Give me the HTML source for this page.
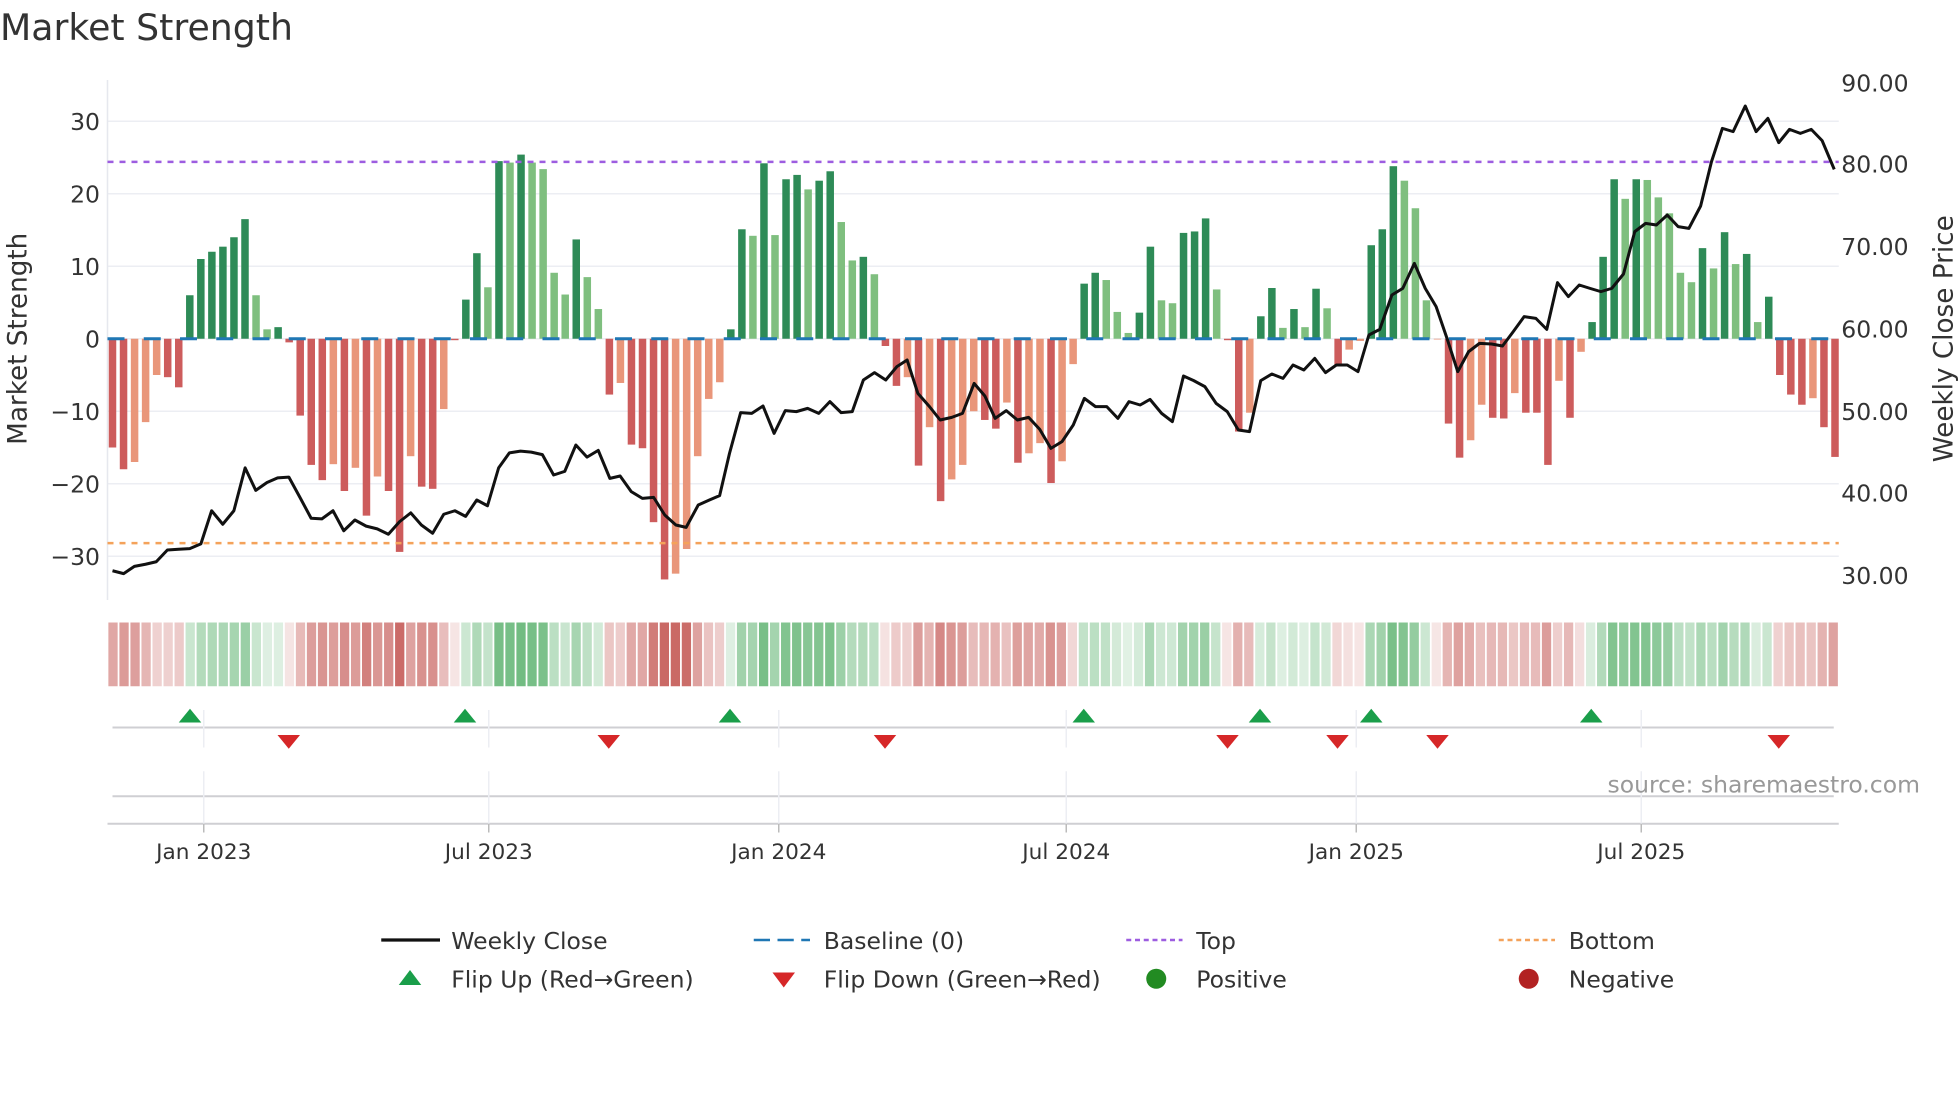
<!DOCTYPE html>
<html><head><meta charset="utf-8"><style>
html,body{margin:0;padding:0;background:#fff;width:1960px;height:1102px;overflow:hidden}
svg{display:block;font-family:"DejaVu Sans","Liberation Sans",sans-serif}
</style></head><body>
<svg id="s" width="1960" height="1102" viewBox="0 0 1568 881.6" xmlns="http://www.w3.org/2000/svg">
<text x="0" y="32" font-size="29" fill="#333">Market Strength</text>
<g id="grid"></g>
<g id="bars"></g>
<g id="lines"></g>
<g id="strip"></g>
<g id="low"></g>
<text x="80" y="104" font-size="18.8" fill="#333" text-anchor="end">30</text>
<text x="80" y="162" font-size="18.8" fill="#333" text-anchor="end">20</text>
<text x="80" y="220" font-size="18.8" fill="#333" text-anchor="end">10</text>
<text x="80" y="278" font-size="18.8" fill="#333" text-anchor="end">0</text>
<text x="80" y="336" font-size="18.8" fill="#333" text-anchor="end">−10</text>
<text x="80" y="394" font-size="18.8" fill="#333" text-anchor="end">−20</text>
<text x="80" y="452" font-size="18.8" fill="#333" text-anchor="end">−30</text>
<text x="1473" y="73" font-size="18.8" fill="#333">90.00</text>
<text x="1473" y="138" font-size="18.8" fill="#333">80.00</text>
<text x="1473" y="204" font-size="18.8" fill="#333">70.00</text>
<text x="1473" y="270" font-size="18.8" fill="#333">60.00</text>
<text x="1473" y="336" font-size="18.8" fill="#333">50.00</text>
<text x="1473" y="401" font-size="18.8" fill="#333">40.00</text>
<text x="1473" y="467" font-size="18.8" fill="#333">30.00</text>
<text transform="translate(21,271) rotate(-90)" font-size="21" fill="#333" text-anchor="middle">Market Strength</text>
<text transform="translate(1562,271) rotate(-90)" font-size="21" fill="#333" text-anchor="middle">Weekly Close Price</text>
<text x="1536" y="634" font-size="18.8" fill="#999" text-anchor="end">source: sharemaestro.com</text>
<g font-size="17.3" fill="#333" text-anchor="middle">
<text x="163" y="687">Jan 2023</text><text x="391" y="687">Jul 2023</text><text x="623" y="687">Jan 2024</text>
<text x="853" y="687">Jul 2024</text><text x="1085" y="687">Jan 2025</text><text x="1313" y="687">Jul 2025</text>
</g>
<g font-size="18.8" fill="#333">
<line x1="305" y1="752" x2="352" y2="752" stroke="#111" stroke-width="2.6"/>
<text x="361" y="759">Weekly Close</text>
<line x1="603" y1="752" x2="648" y2="752" stroke="#1f77b4" stroke-width="2" stroke-dasharray="13 6"/>
<text x="659" y="759">Baseline (0)</text>
<line x1="901" y1="752" x2="946" y2="752" stroke="#9d5de0" stroke-width="2" stroke-dasharray="4 3"/>
<text x="957" y="759">Top</text>
<line x1="1199" y1="752" x2="1244" y2="752" stroke="#f4a25a" stroke-width="2" stroke-dasharray="4 3"/>
<text x="1255" y="759">Bottom</text>
<polygon points="319,788 337,788 328,776" fill="#1a9e4a"/>
<text x="361" y="790">Flip Up (Red→Green)</text>
<polygon points="618,778 636,778 627,790" fill="#d62728"/>
<text x="659" y="790">Flip Down (Green→Red)</text>
<circle cx="925" cy="783" r="8" fill="#228b22"/>
<text x="957" y="790">Positive</text>
<circle cx="1223" cy="783" r="8" fill="#b22222"/>
<text x="1255" y="790">Negative</text>
</g>
</svg>
<script>
var NS="http://www.w3.org/2000/svg";
function el(p,t,a){var e=document.createElementNS(NS,t);for(var k in a)e.setAttribute(k,a[k]);document.getElementById(p).appendChild(e);return e;}
var data="-15D -18D -17L -11.5L -5L -5.3D -6.7D 6D 11D 12D 12.7D 14D 16.5D 6L 1.3L 1.6D -0.5D -10.6D -17.4D -19.5D -17.3L -21D -17.8L -24.4D -19L -21D -29.4D -16.2L -20.4D -20.7D -9.7L -0.2D 5.4D 11.8D 7.1L 24.5D 24.3L 25.4D 24.3L 23.4L 9.1L 6.1L 13.7D 8.5L 4.1L -7.7D -6.1L -14.6D -15.1D -25.3D -33.2D -32.4L -29L -16.2L -8.3L -6L 1.3D 15.1D 14.2L 24.2D 14.3L 22D 22.6D 20.6L 21.8D 23.1D 16.1L 10.8L 11.3D 8.9L -1D -6.5D -5.3L -17.5D -12.2L -22.4D -19.4L -17.4L -10L -11.2D -12.4D -8.8L -17.1D -15.8L -14.4L -19.9D -16.9L -3.5L 7.6D 9.1D 8.1L 3.7L 0.8L 3.6D 12.7D 5.3L 4.9L 14.6D 14.8D 16.6D 6.8L -0.2D -12.8D -10.2L 3.1D 7D 1.5L 4.1D 1.6L 6.9D 4.2L -3.6D -1.5L -0.3L 12.9D 15.1D 23.8D 21.8L 18L 5.3L -0.1L -11.7D -16.4D -14L -9.1L -10.9D -11D -7.5L -10.2D -10.2D -17.4D -5.8L -10.9D -1.8L 2.3D 11.3D 22D 19.3L 22D 21.9L 19.5L 17.3L 9.1L 7.8L 12.5D 9.7L 14.7D 10.3L 11.7D 2.3L 5.8D -5D -7.7D -9.1D -8.2L -12.2D -16.3D".split(" ");
var n=data.length,x0=90,x1=1468,dx=(x1-x0)/(n-1),y0=271,k=5.8;
[30,20,10,0,-10,-20,-30].forEach(function(v){el("grid","line",{x1:86,x2:1471,y1:y0-v*k,y2:y0-v*k,stroke:"#eceef3","stroke-width":1.2});});
el("grid","line",{x1:86,x2:86,y1:64,y2:480,stroke:"#e6e8ee","stroke-width":1.2});
function mix(a,b,t){return "rgb("+[0,1,2].map(function(i){return Math.round(a[i]+(b[i]-a[i])*t)}).join(",")+")";}
for(var i=0;i<n;i++){
  var v=parseFloat(data[i]),d=data[i].slice(-1)=="D",x=x0+i*dx;
  var c=v>=0?(d?"#2e8b57":"#7fbf7f"):(d?"#cd5c5c":"#e9967a");
  var y=v>=0?y0-v*k:y0,h=Math.abs(v)*k;
  el("bars","rect",{x:x-3,y:y,width:6,height:Math.max(h,0.6),fill:c});
  var t=Math.min(1,Math.abs(v)/30);t=0.15+0.75*t;
  var sc=v>=0?mix([255,255,255],[76,170,96],t):mix([255,255,255],[196,88,84],t);
  el("strip","rect",{x:86+i*(1385/n)+0.7,y:498,width:1385/n-1.4,height:51,fill:sc});
}
el("lines","line",{x1:86,x2:1471,y1:y0,y2:y0,stroke:"#1f77b4","stroke-width":2.4,"stroke-dasharray":"13.6 15.4"});
el("lines","line",{x1:86,x2:1471,y1:129.5,y2:129.5,stroke:"#9d5de0","stroke-width":2,"stroke-dasharray":"4.8 4.8"});
el("lines","line",{x1:86,x2:1471,y1:434.5,y2:434.5,stroke:"#f4a25a","stroke-width":2,"stroke-dasharray":"4.8 4.8"});
var z1=[252,1430,277,1438,301,1418,326,1412,350,1405,375,1372,400,1370,425,1368,450,1355,474,1262,499,1300,524,1262,549,1142,573,1205,598,1183,622,1170,647,1168,672,1225,697,1283,721,1285,746,1262,770,1318,795,1288,820,1305,845,1313,870,1328,895,1293,920,1268,944,1302,969,1325,994,1272,1019,1262,1043,1278,1068,1232,1092,1248,1117,1142,1141,1100,1166,1095,1190,1098,1215,1105,1240,1162,1265,1152,1290,1078,1315,1112,1340,1093,1365,1172,1390,1165,1415,1210,1440,1230,1465,1228,1490,1275,1515,1302,1540,1308,1565,1240];
var z3=[22,1015,45,1008,70,1055,95,1075,120,1072,145,1125,170,1155,193,1162,220,1095,245,1080,268,1067,290,940,315,818,340,820,365,798,390,880,415,812,440,815,465,805,490,820,515,785,540,818,565,815,590,720,615,698,640,720,665,680,688,660,712,760,738,800,762,840,788,832,812,820,838,730,862,768,885,835,910,812,935,840,960,832,985,868,1010,925,1035,905,1060,855,1085,775,1110,800,1135,800,1160,835,1185,785,1210,795,1232,778,1258,820,1282,845,1307,708,1330,722,1355,740,1380,790,1405,815,1430,870,1455,875,1480,722,1505,702,1530,715];
var z4=[30,825,55,840,80,805,105,848,130,825,155,825,180,845,205,735,230,718,258,615,283,595,310,520,335,595,360,650,385,745,410,845,435,785,460,760,488,762,513,768,538,725,563,680,590,685,615,718,640,578,665,620,690,585,715,595,740,605,765,595,792,552,818,425,843,400,868,405,893,375,918,410,943,415,970,348,995,215,1020,115,1045,125,1073,48,1098,125,1125,85,1150,158,1175,118,1200,130,1225,118,1250,152,1278,238];
var pts=[];
for(var j=0;j<z1.length;j+=2){var X=z1[j]/2.8,Y=48+z1[j+1]/3.5;if(X<486)pts.push(X.toFixed(1)+","+Y.toFixed(1));}
for(j=0;j<z3.length;j+=2){pts.push((480+z3[j]/2.8).toFixed(1)+","+(112+z3[j+1]/3.75).toFixed(1));}
for(j=0;j<z4.length;j+=2){pts.push((1024+z4[j]/2.8825).toFixed(1)+","+(72+z4[j+1]/3.75).toFixed(1));}
el("lines","polyline",{points:pts.join(" "),fill:"none",stroke:"#111","stroke-width":2.4,"stroke-linejoin":"round"});
el("low","line",{x1:90,x2:1467,y1:582,y2:582,stroke:"#cfcfd3","stroke-width":1.6});
el("low","line",{x1:90,x2:1467,y1:637,y2:637,stroke:"#cfcfd3","stroke-width":1.6});
el("low","line",{x1:86,x2:1471,y1:659,y2:659,stroke:"#cfcfd3","stroke-width":1.6});
[163,391,623,853,1085,1313].forEach(function(x){
 el("low","line",{x1:x,x2:x,y1:568,y2:598,stroke:"#eceef3","stroke-width":1.2});
 el("low","line",{x1:x,x2:x,y1:617,y2:659,stroke:"#eceef3","stroke-width":1.2});
 el("low","line",{x1:x,x2:x,y1:659,y2:666,stroke:"#bbb","stroke-width":1.2});
});
[152,372,584,867,1008,1097,1273].forEach(function(x){el("low","polygon",{points:(x-9)+",578 "+(x+9)+",578 "+x+",567",fill:"#1a9e4a"});});
[231,487,708,982,1070,1150,1423].forEach(function(x){el("low","polygon",{points:(x-9)+",588 "+(x+9)+",588 "+x+",599",fill:"#d62728"});});
</script>
</body></html>
